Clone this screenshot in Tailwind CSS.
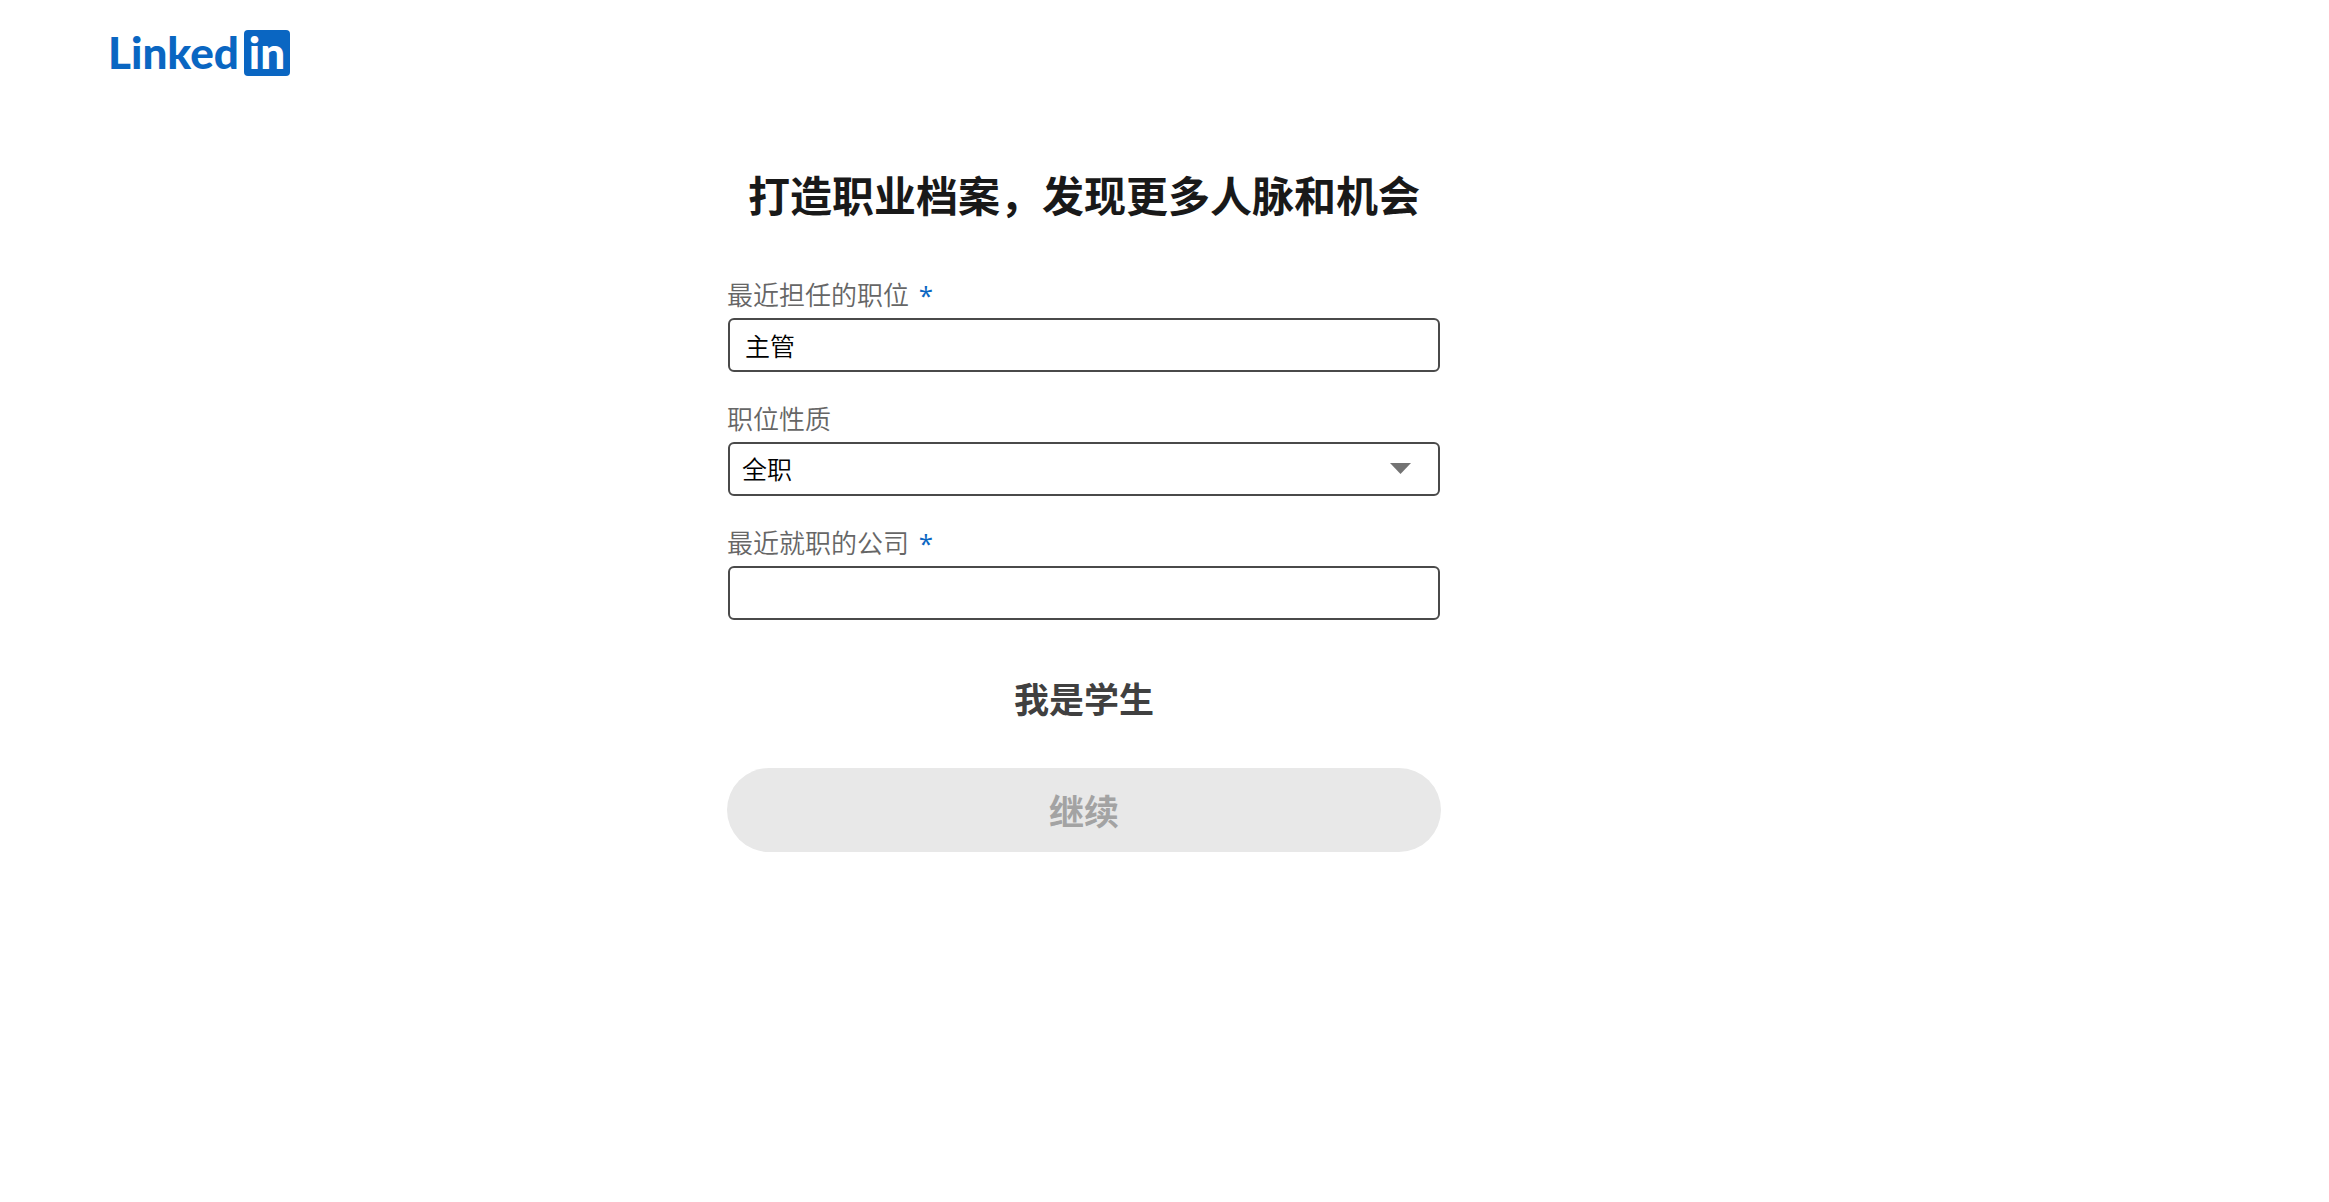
<!DOCTYPE html>
<html lang="zh-CN">
<head>
<meta charset="utf-8">
<meta name="viewport" content="width=device-width, initial-scale=1">
<title>LinkedIn</title>
<script src="https://cdn.jsdelivr.net/npm/@tailwindcss/browser@4"></script>
</head>
<body class="min-h-screen bg-white font-['Noto_Sans_CJK_SC',sans-serif] text-[#191919]">
<header class="px-[111px] pt-[30px]">
  <a href="#" aria-label="LinkedIn" class="flex w-fit items-start gap-[5px] font-['Lato',sans-serif] text-[44px] leading-[44px] font-black text-[#0a66c2]">
    <span class="-ml-[3px]">Linked</span>
    <span class="flex size-[46px] justify-center rounded-sm bg-[#0a66c2] text-white">in</span>
  </a>
</header>
<main class="px-4 pt-[86px] lg:pr-[177px]">
  <form class="mx-auto flex w-full max-w-[714px] flex-col">
    <h1 class="mb-12 text-center text-[42px] leading-[64px] font-bold">打造职业档案，发现更多人脉和机会</h1>
    <label for="title" class="mb-1 text-[26px] leading-[40px] font-[350] text-[#666]">最近担任的职位 <span class="ml-1 font-['Open_Sans',sans-serif] leading-none font-normal text-[#0a66c2]">*</span></label>
    <input id="title" type="text" value="主管" class="mx-px mb-[26px] h-[54px] rounded-md border-2 border-[#4a4a4a] px-[15px] text-[25px] font-[350] text-black">
    <label for="kind" class="mb-1 text-[26px] leading-[40px] font-[350] text-[#666]">职位性质</label>
    <div class="relative mx-px mb-[26px]">
      <select id="kind" class="block h-[54px] w-full appearance-none rounded-md border-2 border-[#4a4a4a] px-3 text-[25px] font-[350] text-black">
        <option>全职</option>
      </select>
      <svg class="pointer-events-none absolute top-[21px] right-[29px] h-[11px] w-[21px]" viewBox="0 0 21 11" fill="#737373" aria-hidden="true"><path d="M0 0h21L10.5 11z"/></svg>
    </div>
    <label for="company" class="mb-1 text-[26px] leading-[40px] font-[350] text-[#666]">最近就职的公司 <span class="ml-1 font-['Open_Sans',sans-serif] leading-none font-normal text-[#0a66c2]">*</span></label>
    <input id="company" type="text" class="mx-px mb-[46px] h-[54px] rounded-md border-2 border-[#4a4a4a] px-[15px] text-[25px] font-[350] text-black">
    <button type="button" class="mb-[38px] self-center text-[35px] leading-[64px] font-bold text-[#404040]">我是学生</button>
    <button type="submit" disabled class="h-[84px] rounded-full bg-[#e8e8e8] text-[35px] font-bold text-[#a3a3a3]">继续</button>
  </form>
</main>
</body>
</html>
